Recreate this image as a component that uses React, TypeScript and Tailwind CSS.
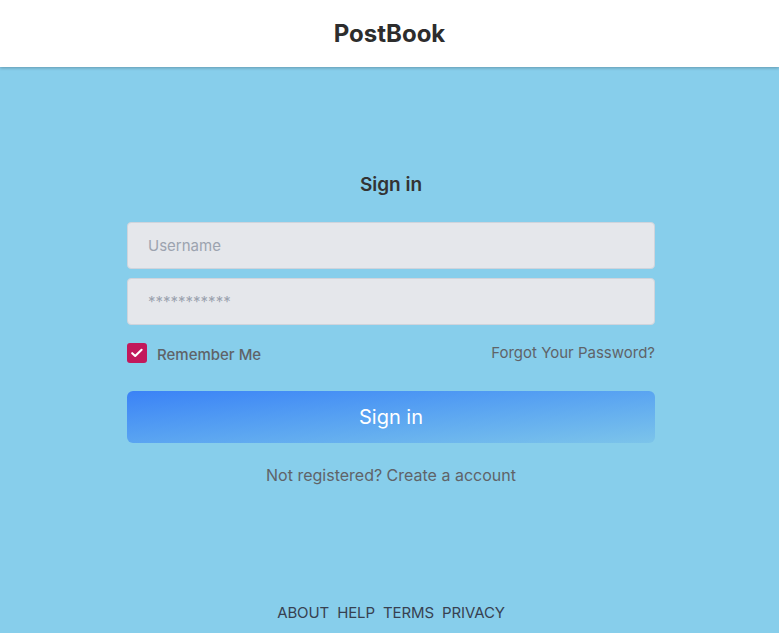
import React from "react";

export default function App() {
  return (
    <div className="min-h-[633px] h-[633px] flex flex-col bg-[#87ceeb] font-['Inter','Noto_Sans',sans-serif]">
      <header className="h-[67px] shrink-0 bg-white flex items-center justify-center shadow-[0_1px_3px_rgba(0,0,0,0.25)] relative z-10">
        <h1 className="text-[24px] font-bold text-[#2d2d2d] tracking-[0px]">PostBook</h1>
      </header>
      <main className="flex-1 flex flex-col items-center pl-[3px]">
        <div className="w-[528px] mt-[106px] flex flex-col">
          <h2 className="text-center text-[19px] font-semibold text-[#333] leading-[24px]">Sign in</h2>
          <input
            className="mt-[25px] h-[47px] w-full rounded-[4px] border border-[#cfd4dc] bg-[#e5e7eb] px-[20px] text-[15px] text-gray-700 placeholder:text-[#9ca3af] outline-none"
            placeholder="Username"
          />
          <input
            className="mt-[9px] h-[47px] w-full rounded-[4px] border border-[#cfd4dc] bg-[#e5e7eb] px-[20px] text-[15px] text-gray-700 placeholder:text-[#9ca3af] outline-none"
            placeholder="***********"
          />
          <div className="mt-[18px] h-[20px] flex items-start justify-between">
            <label className="flex items-start gap-[10px]">
              <span className="w-[20px] h-[20px] shrink-0 rounded-[3px] bg-[#c2185b] flex items-center justify-center">
                <svg width="20" height="20" viewBox="0 0 20 20" fill="none">
                  <path d="M5.2 10.2 L8.2 13 L14.6 6.8" stroke="white" strokeWidth="2.1" strokeLinecap="round" strokeLinejoin="round" />
                </svg>
              </span>
              <span className="text-[15px] leading-[18px] font-medium text-[#5f6368] mt-[3px]">Remember Me</span>
            </label>
            <a className="text-[15px] leading-[18px] text-[#5f6368] mt-[1px]">Forgot Your Password?</a>
          </div>
          <button className="mt-[28px] h-[52px] w-full rounded-[6px] bg-gradient-to-br from-[#3b82f6] to-[#7cc4ea] text-white text-[20px]">
            Sign in
          </button>
          <p className="mt-[20px] text-center text-[16px] text-[#5f6368]">Not registered? Create a account</p>
        </div>
        <footer className="mt-auto mb-[9px] flex gap-[8px] text-[15px] text-[#374151] tracking-[-0.1px]">
          <a>ABOUT</a>
          <a>HELP</a>
          <a>TERMS</a>
          <a>PRIVACY</a>
        </footer>
      </main>
    </div>
  );
}
